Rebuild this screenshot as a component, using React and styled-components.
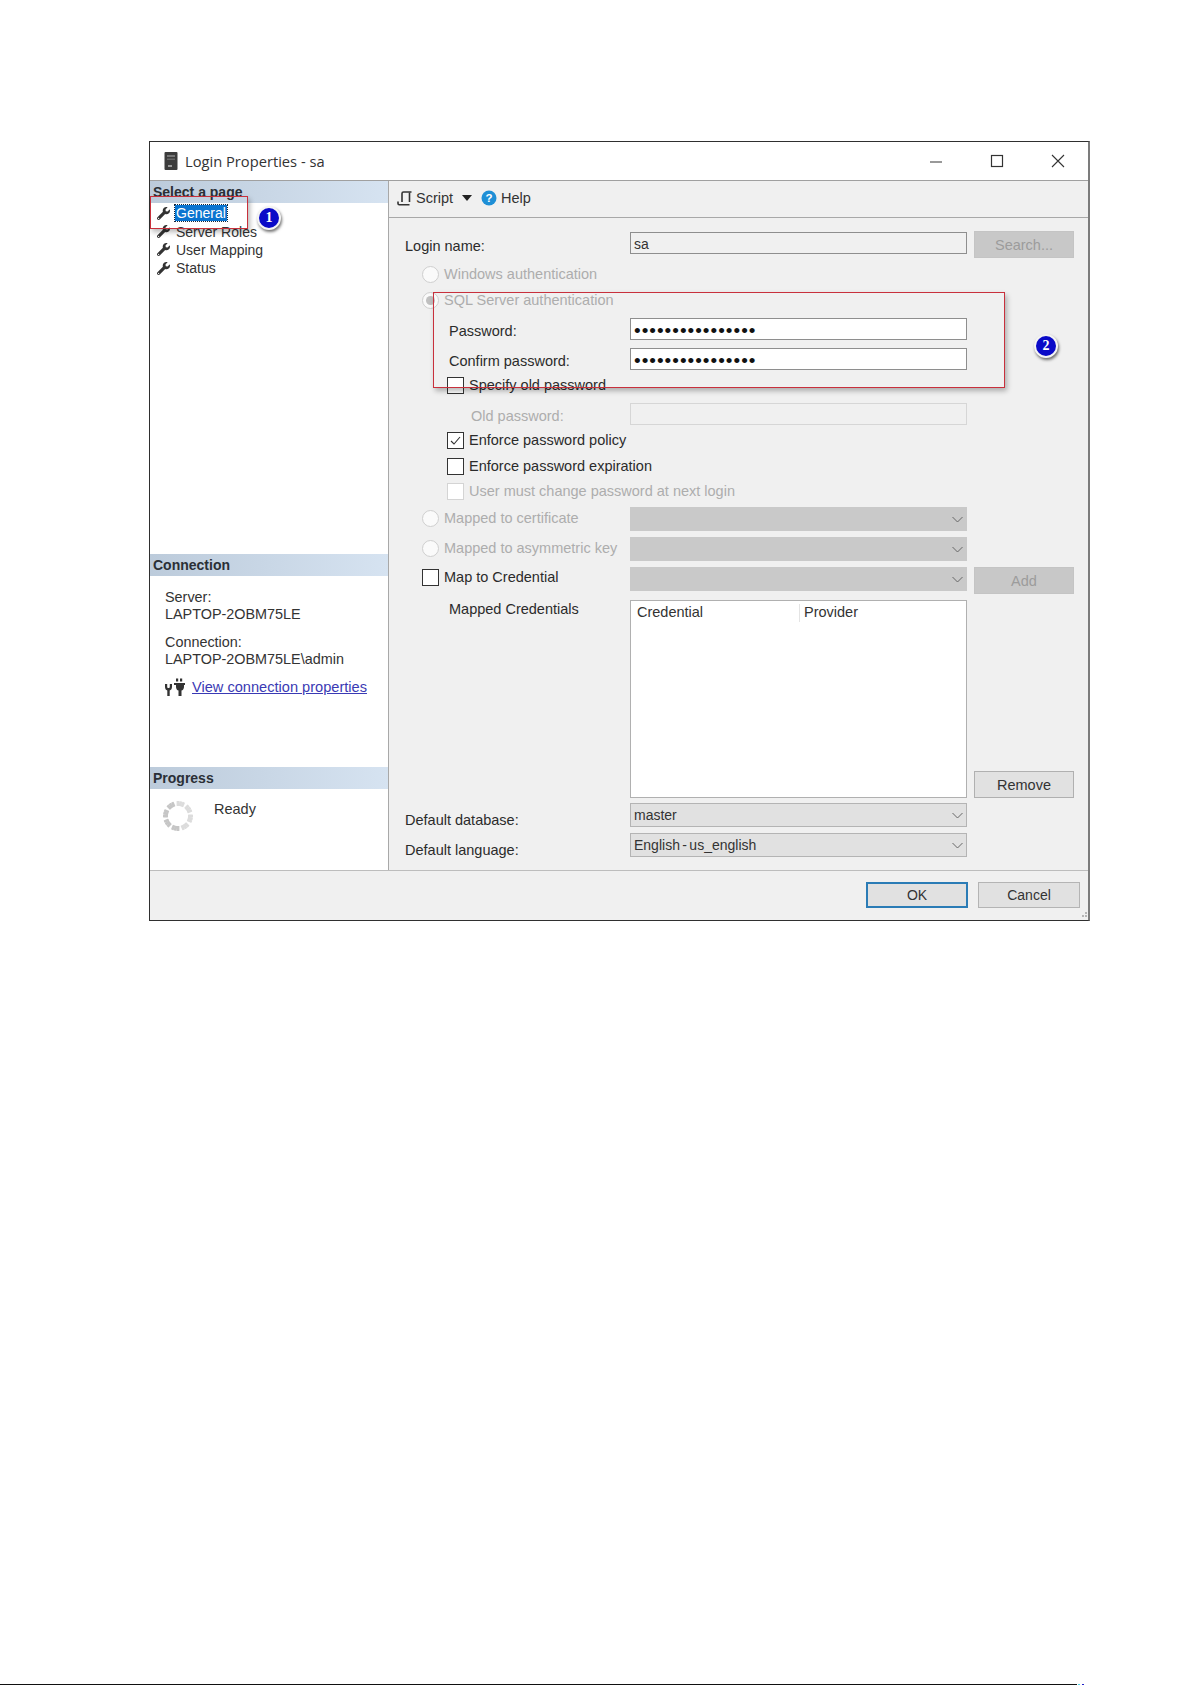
import React from "react";
import styled, { createGlobalStyle } from "styled-components";
import { FaWrench } from "react-icons/fa";

const GlobalStyle = createGlobalStyle`
  html, body {
    margin: 0;
    height: 100%;
    background: #fff;
    overflow: hidden;
  }
  body {
    font-family: "Liberation Sans", Arial, sans-serif;
    font-size: 14.5px;
    color: #2b2b2b;
  }
`;

const Page = styled.div`
  width: 1192px;
  height: 1685px;
  padding: 141px 0 0 149px;
  box-sizing: border-box;
`;

const Dialog = styled.div`
  position: relative;
  width: 941px;
  height: 780px;
  box-sizing: border-box;
  background: #f0f0f0;
  border: 1px solid #2f2f2f;
  border-right: 2px solid #7c7c7c;
  display: flex;
  flex-direction: column;
`;

const TitleBar = styled.div`
  height: 38px;
  flex: none;
  background: #fff;
  border-bottom: 1px solid #a0a0a0;
  display: flex;
  align-items: center;
  padding-left: 14px;
`;

const Title = styled.span`
  font-family: "Open Sans", sans-serif;
  font-size: 14.7px;
  color: #333;
  margin-left: 7px;
  flex: 1;
`;

const WindowBtn = styled.svg`
  width: 14px;
  height: 14px;
  margin-right: ${(p) => p.$mr}px;
  flex: none;
`;

const Body = styled.div`
  flex: 1;
  display: flex;
  min-height: 0;
`;

const Side = styled.div`
  width: 238px;
  flex: none;
  background: #fff;
  border-right: 1px solid #a8a8a8;
  display: flex;
  flex-direction: column;
`;

const SideHeader = styled.div`
  height: 22px;
  flex: none;
  line-height: 22px;
  padding-left: 3px;
  font-weight: bold;
  font-size: 14px;
  color: #2a2f36;
  background: linear-gradient(90deg, #bccbdb 0%, #d6e3f1 100%);
`;

const PageList = styled.div`
  height: 351px;
  padding: 1px 0 0 7px;
  box-sizing: border-box;
`;

const PageItem = styled.div`
  height: 18.4px;
  display: flex;
  align-items: center;
  gap: 5px;
  font-size: 14px;
  color: #333;
`;

const ItemText = styled.span`
  padding: 0 1px;
  line-height: 16px;
  background: ${(p) => (p.$active ? "#0a74d0" : "transparent")};
  color: ${(p) => (p.$active ? "#fff" : "inherit")};
  outline: ${(p) => (p.$active ? "1px dotted #16263a" : "none")};
`;

const ConnBlock = styled.div`
  height: 191px;
  padding: 13px 0 0 15px;
  box-sizing: border-box;
  line-height: 17px;
  font-size: 14.4px;
  color: #333;
`;

const ConnGroup = styled.div`
  margin-bottom: 11px;
`;

const LinkRow = styled.div`
  display: flex;
  align-items: center;
  gap: 7px;
  margin-top: -1px;
`;

const ConnLink = styled.a`
  color: #3a3ab4;
  text-decoration: underline;
  font-size: 14.6px;
`;

const ProgressBlock = styled.div`
  display: flex;
  align-items: flex-start;
  padding: 11px 0 0 12px;
  gap: 20px;
  color: #333;
`;

const ReadyText = styled.span`
  margin-top: 1px;
`;

const Main = styled.div`
  flex: 1;
  display: flex;
  flex-direction: column;
  min-width: 0;
`;

const Toolbar = styled.div`
  height: 34px;
  padding-bottom: 2px;
  flex: none;
  border-bottom: 1px solid #a8a8a8;
  display: flex;
  align-items: center;
  padding-left: 8px;
  color: #333;
`;

const ToolText = styled.span`
  margin-left: ${(p) => p.$ml}px;
`;

const Caret = styled.span`
  width: 0;
  height: 0;
  margin-left: 9px;
  margin-right: 9px;
  border-left: 5px solid transparent;
  border-right: 5px solid transparent;
  border-top: 6px solid #222;
`;

const Form = styled.div`
  padding: 13px 0 0 16px;
  display: flex;
  flex-direction: column;
`;

const Row = styled.div`
  display: grid;
  grid-template-columns: 218px 337px 100px;
  grid-template-rows: ${(p) => p.$h}px;
  column-gap: 7px;
  height: ${(p) => p.$h}px;
  margin-top: ${(p) => p.$mt || 0}px;
  align-items: center;
`;

const FieldLabel = styled.div`
  padding-left: ${(p) => p.$indent || 0}px;
  padding-top: ${(p) => p.$dy || 0}px;
  color: ${(p) => (p.$off ? "#adadad" : "#2b2b2b")};
  align-self: ${(p) => (p.$top ? "start" : "center")};
  white-space: nowrap;
`;

const Option = styled.div`
  display: flex;
  align-items: center;
  gap: 5px;
  padding-left: ${(p) => p.$indent}px;
  color: ${(p) => (p.$off ? "#adadad" : "#2b2b2b")};
  white-space: nowrap;
  grid-column: ${(p) => p.$span || "auto"};
`;

const Radio = styled.span`
  width: 15px;
  height: 15px;
  flex: none;
  border-radius: 50%;
  background: #fafafa;
  border: 1px solid #cfcfcf;
  display: flex;
  align-items: center;
  justify-content: center;
`;

const RadioDot = styled.span`
  width: 9px;
  height: 9px;
  border-radius: 50%;
  background: #c0c0c0;
`;

const Check = styled.span`
  width: 15px;
  height: 15px;
  flex: none;
  background: #fff;
  border: 1px solid ${(p) => (p.$off ? "#d4d4d4" : "#333")};
  display: flex;
  align-items: center;
  justify-content: center;
`;

const TextBox = styled.div`
  height: 22px;
  box-sizing: border-box;
  border: 1px solid ${(p) => (p.$off ? "#d6d6d6" : "#8e8e8e")};
  background: ${(p) => (p.$white ? "#fff" : "#f0f0f0")};
  padding-left: 3px;
  line-height: ${(p) => (p.$dots ? "23px" : "22px")};
  align-self: start;
  margin-top: ${(p) => p.$dy || 0}px;
  color: ${(p) => (p.$dots ? "#111" : "#333")};
  letter-spacing: ${(p) => (p.$dots ? "1px" : "0")};
  font-size: ${(p) => (p.$dots ? "19px" : "14px")};
  overflow: hidden;
`;

const Select = styled.div`
  height: 24px;
  box-sizing: border-box;
  background: ${(p) => (p.$off ? "#c9c9c9" : "#e1e1e1")};
  border: 1px solid ${(p) => (p.$off ? "#c9c9c9" : "#b4b4b4")};
  display: flex;
  align-items: center;
  justify-content: space-between;
  padding: 0 3px 0 3px;
  align-self: start;
  font-size: 14px;
  word-spacing: -1.5px;
  color: #333;
`;

const Btn = styled.div`
  height: 27px;
  box-sizing: border-box;
  background: ${(p) => (p.$off ? "#c8c8c8" : "#e1e1e1")};
  border: 1px solid ${(p) => (p.$off ? "#c4c4c4" : "#b0b0b0")};
  color: ${(p) => (p.$off ? "#9c9c9c" : "#333")};
  display: flex;
  align-items: center;
  justify-content: center;
  align-self: ${(p) => p.$align || "start"};
`;

const CredList = styled.div`
  height: 198px;
  box-sizing: border-box;
  background: #fff;
  border: 1px solid #b0b0b0;
  display: flex;
  align-items: flex-start;
  padding: 3px 0 0 6px;
  color: #333;
`;

const CredHead = styled.span`
  width: ${(p) => p.$w}px;
  height: 18px;
  padding-left: ${(p) => p.$pl || 0}px;
  border-left: ${(p) => (p.$rule ? "1px solid #e4e4e4" : "none")};
`;

const Footer = styled.div`
  height: 50px;
  flex: none;
  box-sizing: border-box;
  border-top: 1px solid #bdbdbd;
  display: flex;
  justify-content: flex-end;
  align-items: flex-start;
  gap: 10px;
  padding: 11px 8px 0 0;
`;

const FootBtn = styled.div`
  width: 102px;
  height: 26px;
  box-sizing: border-box;
  background: #e1e1e1;
  border: ${(p) => (p.$primary ? "2px solid #2b7cb6" : "1px solid #b4b4b4")};
  color: #333;
  font-size: 14px;
  display: flex;
  align-items: center;
  justify-content: center;
`;

const Grip = styled.svg`
  position: absolute;
  right: 0;
  bottom: 0;
  width: 10px;
  height: 10px;
`;

const Callout = styled.div`
  position: absolute;
  left: ${(p) => p.$x}px;
  top: ${(p) => p.$y}px;
  width: ${(p) => p.$w}px;
  height: ${(p) => p.$h}px;
  box-sizing: border-box;
  border: 1.5px solid #c8303c;
  box-shadow: 2px 3px 5px rgba(0, 0, 0, 0.28);
  pointer-events: none;
`;

const Badge = styled.div`
  position: absolute;
  left: ${(p) => p.$x}px;
  top: ${(p) => p.$y}px;
  width: 24px;
  height: 24px;
  box-sizing: border-box;
  border-radius: 50%;
  background: #0a0ac8;
  border: 2px solid #f4f4f4;
  box-shadow: 1px 2px 3px rgba(0, 0, 0, 0.55);
  color: #fff;
  font-family: "Liberation Serif", serif;
  font-weight: bold;
  font-size: 14px;
  display: flex;
  align-items: center;
  justify-content: center;
`;

const BottomRule = styled.div`
  display: flex;
  height: 1px;
  margin: 763px 0 0 -149px;
`;

const RuleLine = styled.span`
  width: 1077px;
  background: #111;
`;

const RuleTick = styled.span`
  width: ${(p) => p.$w}px;
  margin-left: ${(p) => p.$ml}px;
  background: ${(p) => p.$c};
`;

const ServerIcon = () => (
  <svg width="14" height="18" viewBox="0 0 14 18">
    <rect x="0.5" y="0" width="13" height="18" rx="1" fill="#3c3c3c" />
    <rect x="3" y="3" width="8" height="2" fill="#777" />
    <rect x="3" y="6.5" width="8" height="1.5" fill="#666" />
    <rect x="4" y="13" width="4" height="2" fill="#999" />
  </svg>
);

const ScriptIcon = () => (
  <svg width="15" height="15" viewBox="0 0 15 15" fill="none" stroke="#333" strokeWidth="1.6">
    <path d="M5 11V2.500C5 1.500 5.500 1 6.500 1H14.500" />
    <path d="M12.500 1.500V11" />
    <path d="M1 10.500V12.500C1 13.300 1.500 13.700 2.200 13.700H12.500" />
  </svg>
);

const HelpIcon = () => (
  <svg width="16" height="16" viewBox="0 0 16 16">
    <circle cx="8" cy="8" r="7.5" fill="#1e8fd6" />
    <text x="8" y="12" textAnchor="middle" fontSize="11.5" fontWeight="bold" fill="#fff" fontFamily="Liberation Sans">?</text>
  </svg>
);

const PlugIcon = () => (
  <svg width="20" height="18" viewBox="0 0 20 18" fill="#333">
    <path d="M0 6h2.200v2.500c0 1 .5 1.600 1.100 1.600h.4c.6 0 1.100-.6 1.100-1.600V6H7v3c0 2-1.200 3.200-2.300 3.500V18H2.300v-5.500C1.200 12.200 0 11 0 9z" />
    <rect x="11" y="0.500" width="2.200" height="3" />
    <rect x="15" y="0.500" width="2.200" height="3" />
    <path d="M9 5h11v2h-1v2c0 2-1.300 3.300-2.500 3.600V18h-3v-5.400C12.300 12.300 11 11 11 9V7H9z" />
  </svg>
);

const Spinner = () => (
  <svg width="32" height="32" viewBox="-16 -16 32 32">
    {Array.from({ length: 32 }).map((_, i) =>
      i % 4 === 3 ? null : (
        <rect
          key={i}
          x="-1.400"
          y="-15"
          width="2.800"
          height="5"
          rx="0.600"
          fill={i < 16 ? "#dcdcdc" : "#c6c6c6"}
          transform={`rotate(${i * 11.25})`}
        />
      )
    )}
  </svg>
);

const Chevron = () => (
  <svg width="11" height="7" viewBox="0 0 11 7" fill="none" stroke="#666" strokeWidth="1">
    <path d="M.5 1l5 5 5-5" />
  </svg>
);

const pages = ["General", "Server Roles", "User Mapping", "Status"];

const App = () => {
  return (
    <Page>
      <GlobalStyle />
      <Dialog>
        <TitleBar>
          <ServerIcon />
          <Title>Login Properties - sa</Title>
          <WindowBtn $mr={47} viewBox="0 0 14 14">
            <path d="M1 8h12" stroke="#555" strokeWidth="1.200" />
          </WindowBtn>
          <WindowBtn $mr={47} viewBox="0 0 14 14">
            <rect x="1.500" y="1.500" width="11" height="11" fill="none" stroke="#333" strokeWidth="1.200" />
          </WindowBtn>
          <WindowBtn $mr={23} viewBox="0 0 14 14">
            <path d="M1 1l12 12M13 1L1 13" stroke="#333" strokeWidth="1.100" />
          </WindowBtn>
        </TitleBar>
        <Body>
          <Side>
            <SideHeader>Select a page</SideHeader>
            <PageList>
              {pages.map((name, i) => (
                <PageItem key={name}>
                  <FaWrench size={13} color="#333" />
                  <ItemText $active={i === 0}>{name}</ItemText>
                </PageItem>
              ))}
            </PageList>
            <SideHeader>Connection</SideHeader>
            <ConnBlock>
              <ConnGroup>
                Server:
                <br />
                LAPTOP-2OBM75LE
              </ConnGroup>
              <ConnGroup>
                Connection:
                <br />
                LAPTOP-2OBM75LE\admin
              </ConnGroup>
              <LinkRow>
                <PlugIcon />
                <ConnLink>View connection properties</ConnLink>
              </LinkRow>
            </ConnBlock>
            <SideHeader>Progress</SideHeader>
            <ProgressBlock>
              <Spinner />
              <ReadyText>Ready</ReadyText>
            </ProgressBlock>
          </Side>
          <Main>
            <Toolbar>
              <ScriptIcon />
              <ToolText $ml={4}>Script</ToolText>
              <Caret />
              <HelpIcon />
              <ToolText $ml={4}>Help</ToolText>
            </Toolbar>
            <Form>
              <Row $h={28}>
                <FieldLabel $dy={2}>Login name:</FieldLabel>
                <TextBox $dy={1}>sa</TextBox>
                <Btn $off>Search...</Btn>
              </Row>
              <Row $h={30}>
                <Option $indent={17} $off $span="1 / 3">
                  <Radio />
                  Windows authentication
                </Option>
              </Row>
              <Row $h={22}>
                <Option $indent={17} $off $span="1 / 3">
                  <Radio>
                    <RadioDot />
                  </Radio>
                  SQL Server authentication
                </Option>
              </Row>
              <Row $h={22} $mt={7}>
                <FieldLabel $indent={44} $dy={4}>Password:</FieldLabel>
                <TextBox $white $dots>••••••••••••••••</TextBox>
              </Row>
              <Row $h={22} $mt={8}>
                <FieldLabel $indent={44} $dy={4}>Confirm password:</FieldLabel>
                <TextBox $white $dots>••••••••••••••••</TextBox>
              </Row>
              <Row $h={22} $mt={4}>
                <Option $indent={42} $span="1 / 3">
                  <Check />
                  Specify old password
                </Option>
              </Row>
              <Row $h={22} $mt={7}>
                <FieldLabel $indent={66} $dy={4} $off>Old password:</FieldLabel>
                <TextBox $off />
              </Row>
              <Row $h={22} $mt={4}>
                <Option $indent={42} $span="1 / 3">
                  <Check>
                    <svg width="13" height="13" viewBox="0 0 13 13" fill="none" stroke="#333" strokeWidth="1.100">
                      <path d="M2 7l3 3 6-7" />
                    </svg>
                  </Check>
                  Enforce password policy
                </Option>
              </Row>
              <Row $h={22} $mt={4}>
                <Option $indent={42} $span="1 / 3">
                  <Check />
                  Enforce password expiration
                </Option>
              </Row>
              <Row $h={22} $mt={3}>
                <Option $indent={42} $off $span="1 / 3">
                  <Check $off />
                  User must change password at next login
                </Option>
              </Row>
              <Row $h={22} $mt={5}>
                <Option $indent={17} $off>
                  <Radio />
                  Mapped to certificate
                </Option>
                <Select $off>
                  <span />
                  <Chevron />
                </Select>
              </Row>
              <Row $h={22} $mt={8}>
                <Option $indent={17} $off>
                  <Radio />
                  Mapped to asymmetric key
                </Option>
                <Select $off>
                  <span />
                  <Chevron />
                </Select>
              </Row>
              <Row $h={20} $mt={8}>
                <Option $indent={17}>
                  <Check />
                  Map to Credential
                </Option>
                <Select $off>
                  <span />
                  <Chevron />
                </Select>
                <Btn $off>Add</Btn>
              </Row>
              <Row $h={198} $mt={13}>
                <FieldLabel $indent={44} $dy={1} $top>Mapped Credentials</FieldLabel>
                <CredList>
                  <CredHead $w={162}>Credential</CredHead>
                  <CredHead $w={160} $pl={4} $rule>Provider</CredHead>
                </CredList>
                <Btn $align="end">Remove</Btn>
              </Row>
              <Row $h={24} $mt={5}>
                <FieldLabel $dy={10}>Default database:</FieldLabel>
                <Select>
                  master
                  <Chevron />
                </Select>
              </Row>
              <Row $h={24} $mt={6}>
                <FieldLabel $dy={10}>Default language:</FieldLabel>
                <Select>
                  English - us_english
                  <Chevron />
                </Select>
              </Row>
            </Form>
          </Main>
        </Body>
        <Footer>
          <FootBtn $primary>OK</FootBtn>
          <FootBtn>Cancel</FootBtn>
        </Footer>
        <Grip viewBox="0 0 10 10" fill="#b5b5b5">
          <rect x="7" y="2" width="2" height="2" />
          <rect x="4" y="5" width="2" height="2" />
          <rect x="7" y="5" width="2" height="2" />
        </Grip>
        <Callout $x={0} $y={54} $w={98} $h={33} />
        <Badge $x={107} $y={64}>1</Badge>
        <Callout $x={283} $y={150} $w={572} $h={96} />
        <Badge $x={884} $y={192}>2</Badge>
      </Dialog>
      <BottomRule>
        <RuleLine />
        <RuleTick $w={2} $ml={1} $c="#55d0e0" />
        <RuleTick $w={2} $ml={2} $c="#2020c8" />
      </BottomRule>
    </Page>
  );
};

export default App;
